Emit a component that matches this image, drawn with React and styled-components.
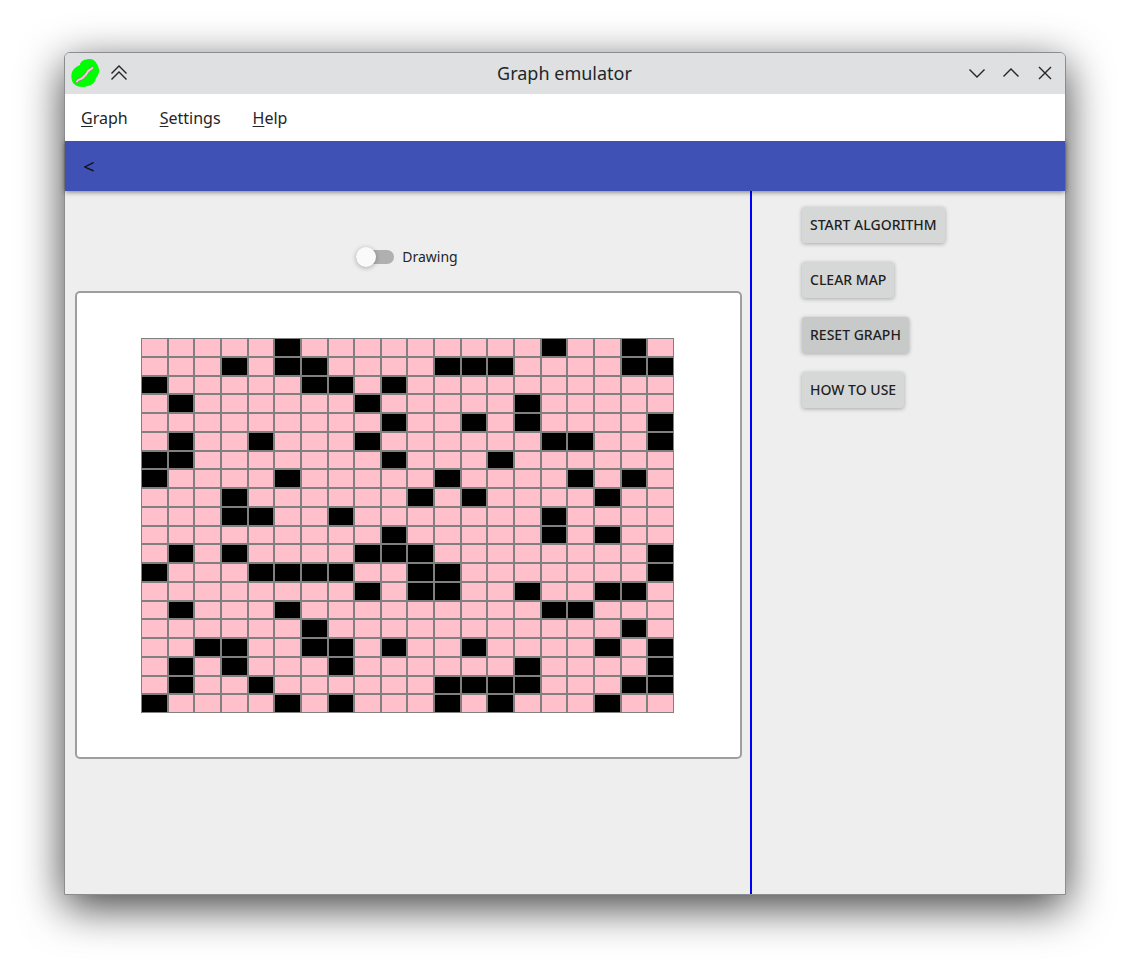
import React, { useState } from "react";
import styled, { createGlobalStyle } from "styled-components";

const GlobalStyle = createGlobalStyle`
  *, *::before, *::after { box-sizing: border-box; }
  body {
    margin: 0;
    background: #ffffff;
    color: #232629;
    font-family: "Noto Sans", "Open Sans", sans-serif;
  }
  button, input { font-family: inherit; }
`;

const Desktop = styled.div`
  display: flex;
  min-height: 100vh;
  padding: 52px 64px 76px;
`;

const Window = styled.main`
  flex: 1;
  min-width: 0;
  display: flex;
  flex-direction: column;
  border: 1px solid #8b8d8f;
  border-radius: 6px 6px 0 0;
  background: #eeeeee;
  box-shadow: 0 12px 44px rgba(0, 0, 0, 0.75);
`;

const TitleBar = styled.header`
  display: grid;
  grid-template-columns: 1fr auto 1fr;
  align-items: center;
  height: 41px;
  padding: 0 7px 2px 6px;
  border-radius: 5px 5px 0 0;
  background: #dee0e2;
`;

const TitleGroup = styled.div`
  display: flex;
  align-items: center;
  gap: ${(p) => (p.$end ? "8px" : "7px")};
  justify-content: ${(p) => (p.$end ? "flex-end" : "flex-start")};
`;

const Title = styled.h1`
  margin: 0;
  font-size: 18px;
  line-height: 24px;
  font-weight: 400;
`;

const IconButton = styled.button`
  display: flex;
  align-items: center;
  justify-content: center;
  width: 26px;
  height: 26px;
  padding: 0;
  border: 0;
  background: transparent;
  color: #232629;
`;

const MenuBar = styled.nav`
  position: relative;
  z-index: 2;
  display: flex;
  align-items: center;
  gap: 32px;
  height: 47px;
  padding: 0 16px;
  background: #ffffff;
`;

const MenuItem = styled.button`
  padding: 0;
  border: 0;
  background: transparent;
  color: #232629;
  font-size: 16px;
  line-height: 24px;

  &::first-letter {
    text-decoration: underline;
    text-underline-offset: 2px;
  }
`;

const ToolBar = styled.div`
  position: relative;
  z-index: 1;
  display: flex;
  align-items: center;
  height: 50px;
  padding: 2px 16px 0;
  background: #3f51b5;
  box-shadow: 0 1px 5px rgba(0, 0, 0, 0.5);
`;

const BackButton = styled.button`
  width: 16px;
  padding: 0;
  border: 0;
  background: transparent;
  color: #111318;
  font-size: 20px;
  line-height: 24px;
`;

const Content = styled.div`
  flex: 1;
  display: grid;
  grid-template-columns: minmax(0, 1fr) 315px;
`;

const MapPanel = styled.section`
  display: flex;
  flex-direction: column;
  padding: 54px 8px 0 10px;
`;

const SwitchLabel = styled.label`
  display: flex;
  align-items: center;
  align-self: center;
  gap: 8px;
  height: 24px;
  padding-right: 3px;
  font-size: 14px;
  line-height: 20px;
`;

const Switch = styled.input`
  appearance: none;
  display: flex;
  align-items: center;
  width: 38px;
  height: 14px;
  margin: 0;
  border-radius: 7px;
  background: #b0b0b0;

  &::before {
    content: "";
    flex: none;
    width: 20px;
    height: 20px;
    border-radius: 50%;
    background: #fafafa;
    box-shadow: 0 1px 5px rgba(0, 0, 0, 0.3);
  }

  &:checked {
    justify-content: flex-end;
    background: #9fa8da;
  }
`;

const Board = styled.div`
  margin-top: 22px;
  padding: 45px 66px 44px 64px;
  border: 2px solid #9e9e9e;
  border-radius: 5px;
  background: #ffffff;
`;

const Grid = styled.div`
  display: grid;
  grid-template-columns: repeat(20, 1fr);
  grid-template-rows: repeat(20, 1fr);
  width: 100%;
  aspect-ratio: 533 / 375;
`;

const Cell = styled.div`
  border: 1px solid #808080;
  background: ${(p) => (p.$wall ? "#000000" : "#ffc0cb")};
`;

const SidePanel = styled.aside`
  display: flex;
  flex-direction: column;
  align-items: flex-start;
  gap: 19px;
  padding: 16px 50px;
  border-left: 2px solid #0000ff;
`;

const ActionButton = styled.button`
  height: 36px;
  padding: 0 8px;
  border: 0;
  border-radius: 3px;
  background: ${(p) => (p.$active ? "#c8caca" : "#d6d8d7")};
  box-shadow: 0 1px 4px rgba(0, 0, 0, 0.3);
  color: #1f1f1f;
  font-size: 14px;
  font-weight: 500;
  line-height: 20px;
  text-transform: uppercase;
  white-space: nowrap;
`;

const WALLS = [
  [5, 15, 18],
  [3, 5, 6, 11, 12, 13, 18, 19],
  [0, 6, 7, 9],
  [1, 8, 14],
  [9, 12, 14, 19],
  [1, 4, 8, 15, 16, 19],
  [0, 1, 9, 13],
  [0, 5, 11, 16, 18],
  [3, 10, 12, 17],
  [3, 4, 7, 15],
  [9, 15, 17],
  [1, 3, 8, 9, 10, 19],
  [0, 4, 5, 6, 7, 10, 11, 19],
  [8, 10, 11, 14, 17, 18],
  [1, 5, 15, 16],
  [6, 18],
  [2, 3, 6, 7, 9, 12, 17, 19],
  [1, 3, 7, 14, 19],
  [1, 4, 11, 12, 13, 14, 18, 19],
  [0, 5, 7, 11, 13, 17],
];

const COLUMNS = Array.from({ length: 20 }, (_, i) => i);

function AppLogo() {
  return (
    <svg width="28" height="30" viewBox="0 0 28 30" aria-hidden="true">
      <path
        d="M9 7C9 3 14 1 19 1C23 1 25 4 27 8C29 13 28 17 25 20C24 25 21 27 17 28C12 30 6 29 3 26C0 23 0 17 1 14C3 10 6 8 9 7Z"
        fill="#00ff00"
      />
      <path
        d="M6 23.5C7 20.5 10 22 12 19.5C14 17 15 17.5 16.5 14C17.5 12 19.5 12 21.5 10"
        fill="none"
        stroke="#6f8a6f"
        strokeWidth="3.4"
        strokeLinecap="round"
      />
      <path
        d="M6 23.5C7 20.5 10 22 12 19.5C14 17 15 17.5 16.5 14C17.5 12 19.5 12 21.5 10"
        fill="none"
        stroke="#f3c6cf"
        strokeWidth="2.2"
        strokeLinecap="round"
      />
    </svg>
  );
}

function LineIcon({ d }) {
  return (
    <svg width="18" height="18" viewBox="0 0 18 18" fill="none" stroke="currentColor" strokeWidth="1.4" aria-hidden="true">
      <path d={d} />
    </svg>
  );
}

export default function App() {
  const [drawing, setDrawing] = useState(false);
  return (
    <>
      <GlobalStyle />
      <Desktop>
        <Window>
          <TitleBar>
            <TitleGroup>
              <AppLogo />
              <IconButton aria-label="Shade window">
                <LineIcon d="M1.5 9.5L9 2L16.5 9.5M1.5 15.5L9 8L16.5 15.5" />
              </IconButton>
            </TitleGroup>
            <Title>Graph emulator</Title>
            <TitleGroup $end>
              <IconButton aria-label="Minimize">
                <LineIcon d="M1.5 5.5L9 13L16.5 5.5" />
              </IconButton>
              <IconButton aria-label="Maximize">
                <LineIcon d="M1.5 12.5L9 5L16.5 12.5" />
              </IconButton>
              <IconButton aria-label="Close">
                <LineIcon d="M3 3L15 15M15 3L3 15" />
              </IconButton>
            </TitleGroup>
          </TitleBar>
          <MenuBar aria-label="Main menu">
            <MenuItem>Graph</MenuItem>
            <MenuItem>Settings</MenuItem>
            <MenuItem>Help</MenuItem>
          </MenuBar>
          <ToolBar>
            <BackButton>&lt;</BackButton>
          </ToolBar>
          <Content>
            <MapPanel>
              <SwitchLabel>
                <Switch
                  type="checkbox"
                  role="switch"
                  checked={drawing}
                  onChange={(e) => setDrawing(e.target.checked)}
                />
                Drawing
              </SwitchLabel>
              <Board>
                <Grid>
                  {WALLS.map((walls, row) =>
                    COLUMNS.map((col) => (
                      <Cell key={`${row}-${col}`} $wall={walls.includes(col)} />
                    ))
                  )}
                </Grid>
              </Board>
            </MapPanel>
            <SidePanel>
              <ActionButton>Start algorithm</ActionButton>
              <ActionButton>Clear map</ActionButton>
              <ActionButton $active>Reset graph</ActionButton>
              <ActionButton>How to use</ActionButton>
            </SidePanel>
          </Content>
        </Window>
      </Desktop>
    </>
  );
}
